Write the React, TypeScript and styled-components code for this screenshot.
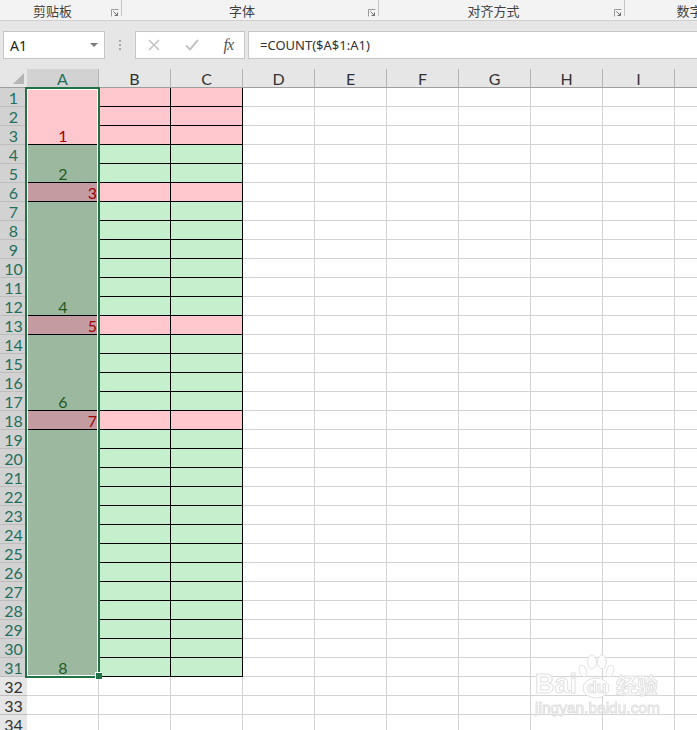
import React, { FC } from "react";
import styled, { createGlobalStyle } from "styled-components";

const GlobalStyle = createGlobalStyle`
  html, body {
    margin: 0;
    padding: 0;
    height: 730px;
    overflow: hidden;
    background: #fff;
  }
`;

const ROW_COUNT = 34;
const UI_FONT = `"Noto Sans", "Liberation Sans", sans-serif`;
const GRID_FONT = `Lato, "Liberation Sans", sans-serif`;
const CJK_FONT = `"Noto Sans CJK SC", "Liberation Sans", sans-serif`;

const Page = styled.div`
  position: relative;
  width: 697px;
  height: 730px;
  overflow: hidden;
  background: #e6e6e6;
  display: flex;
  flex-direction: column;
`;

const Ribbon = styled.div`
  height: 20px;
  flex: none;
  display: flex;
  overflow: hidden;
  background: #f3f3f3;
  border-bottom: 1px solid #cfcfcf;
`;

const RibbonGroup = styled.div<{ $width: number }>`
  position: relative;
  flex: none;
  box-sizing: border-box;
  width: ${(p) => p.$width}px;
  height: 20px;
  padding: 1px 17px 0 0;
  display: flex;
  align-items: center;
  justify-content: center;
  font: 13px/18px ${CJK_FONT};
  color: #3f3f3f;
  white-space: nowrap;
  &::after {
    content: "";
    position: absolute;
    right: 0;
    top: 0;
    width: 1px;
    height: 16px;
    background: #c4c4c4;
  }
`;

const Launcher = styled.svg`
  position: absolute;
  right: 3px;
  top: 9px;
  width: 8px;
  height: 8px;
`;

const FormulaBar = styled.div`
  height: 28px;
  flex: none;
  margin-top: 10px;
  padding-left: 3px;
  display: flex;
  align-items: stretch;
`;

const NameBox = styled.div`
  box-sizing: border-box;
  width: 102px;
  background: #fff;
  border: 1px solid #c6c6c6;
  display: flex;
  align-items: center;
  justify-content: space-between;
  padding: 0 6px;
  font: 14px ${UI_FONT};
  color: #222;
`;

const Caret = styled.span`
  width: 0;
  height: 0;
  border-left: 4px solid transparent;
  border-right: 4px solid transparent;
  border-top: 4px solid #7a7a7a;
`;

const Grip = styled.div`
  width: 30px;
  display: flex;
  flex-direction: column;
  align-items: center;
  justify-content: center;
  gap: 2px;
`;

const GripDot = styled.span`
  width: 2px;
  height: 2px;
  background: #a8a8a8;
`;

const ButtonBox = styled.div`
  box-sizing: border-box;
  width: 110px;
  background: #fff;
  border: 1px solid #c6c6c6;
  display: flex;
  align-items: center;
  justify-content: space-between;
  padding: 0 11px 0 12px;
`;

const FxLabel = styled.span`
  font: italic 16px "Liberation Serif", serif;
  letter-spacing: -1px;
  color: #555;
`;

const FormulaInput = styled.div`
  box-sizing: border-box;
  flex: 1;
  margin-left: 3px;
  background: #fff;
  border: 1px solid #c6c6c6;
  border-right: none;
  padding-left: 11px;
  display: flex;
  align-items: center;
  font: 13px ${UI_FONT};
  color: #333;
`;

const Sheet = styled.div`
  position: relative;
  flex: none;
  margin-top: 10px;
  display: grid;
  grid-template-columns: 27px repeat(10, 72px);
  grid-template-rows: repeat(${ROW_COUNT + 1}, 19px);
`;

const Corner = styled.div`
  grid-row: 1;
  grid-column: 1;
  position: relative;
  box-sizing: border-box;
  border-bottom: 1px solid #9e9e9e;
  &::after {
    content: "";
    position: absolute;
    right: 3px;
    bottom: 3px;
    border-left: 11px solid transparent;
    border-bottom: 11px solid #b5b5b5;
  }
`;

const ColHead = styled.div<{ $col: number; $active?: boolean }>`
  grid-row: 1;
  grid-column: ${(p) => p.$col};
  box-sizing: border-box;
  background: ${(p) => (p.$active ? "#d2d2d2" : "#e6e6e6")};
  border-bottom: 1px solid #9e9e9e;
  border-right: 1px solid #b4b4b4;
  padding-top: 1px;
  display: flex;
  align-items: center;
  justify-content: center;
  font: 16px/18px ${GRID_FONT};
  color: ${(p) => (p.$active ? "#1f6f5c" : "#333")};
`;

const RowHead = styled.div<{ $row: number; $active?: boolean }>`
  grid-row: ${(p) => p.$row};
  grid-column: 1;
  box-sizing: border-box;
  background: ${(p) => (p.$active ? "#d2d2d2" : "#e6e6e6")};
  border-bottom: 1px solid #bdbdbd;
  padding-top: 2px;
  display: flex;
  align-items: center;
  justify-content: center;
  font: 16px/18px ${GRID_FONT};
  color: ${(p) => (p.$active ? "#1f6f5c" : "#333")};
`;

const EmptyCell = styled.div<{ $row: number; $col: number }>`
  grid-row: ${(p) => p.$row};
  grid-column: ${(p) => p.$col};
  box-sizing: border-box;
  background: #fff;
  border-right: 1px solid #d4d4d4;
  border-bottom: 1px solid #d4d4d4;
`;

const DataCell = styled.div<{ $row: number; $col: number; $fill: string }>`
  grid-row: ${(p) => p.$row};
  grid-column: ${(p) => p.$col};
  box-sizing: border-box;
  background: ${(p) => p.$fill};
  border-right: 1px solid #000;
  border-bottom: 1px solid #000;
`;

const MergedCell = styled.div<{
  $row: number;
  $span: number;
  $fill: string;
  $ink: string;
  $right: boolean;
}>`
  grid-row: ${(p) => p.$row} / span ${(p) => p.$span};
  grid-column: 2;
  box-sizing: border-box;
  background: ${(p) => p.$fill};
  border-bottom: 1px solid #000;
  display: flex;
  align-items: flex-end;
  justify-content: ${(p) => (p.$right ? "flex-end" : "center")};
  padding-right: ${(p) => (p.$right ? "2px" : "0")};
  font: 16px/16px ${GRID_FONT};
  color: ${(p) => p.$ink};
`;

const Selection = styled.div`
  position: absolute;
  left: 25px;
  top: 18px;
  width: 75px;
  height: 591px;
  box-sizing: border-box;
  border: 2px solid #217346;
  box-shadow: inset 0 0 0 1px #fff;
  pointer-events: none;
`;

const FillHandle = styled.div`
  position: absolute;
  left: 95px;
  top: 603px;
  width: 6px;
  height: 6px;
  background: #217346;
  border-left: 1px solid #fff;
  border-top: 1px solid #fff;
`;

const Watermark = styled.div`
  position: absolute;
  left: 534px;
  top: 654px;
  width: 130px;
  height: 66px;
  color: rgba(255, 255, 255, 0.9);
  -webkit-text-stroke: 1px #e0e0e0;
  filter: blur(0.3px);
  pointer-events: none;
`;

const Brand = styled.div`
  position: absolute;
  left: 1px;
  top: 13px;
  font: bold 27px/34px "Liberation Sans", sans-serif;
`;

const BrandDu = styled.div`
  position: absolute;
  left: 53px;
  top: 24px;
  font: bold 16px/20px "Liberation Sans", sans-serif;
`;

const BrandCn = styled.div`
  position: absolute;
  left: 82px;
  top: 17px;
  font: bold 21px/26px ${CJK_FONT};
  white-space: nowrap;
`;

const BrandUrl = styled.div`
  position: absolute;
  left: 1px;
  top: 45px;
  font: 15.5px/18px "Liberation Sans", sans-serif;
  white-space: nowrap;
`;

const Paw = styled.svg`
  position: absolute;
  left: 44px;
  top: 0;
  width: 38px;
  height: 46px;
`;

const PINK = "#ffc7ce";
const GREEN = "#c6efce";
const SEL_GREEN = "#9cb9a0";
const SEL_PINK = "#c49ba0";
const INK_GREEN = "#1f5a1f";
const INK_RED = "#9c0006";

interface IBlock {
  row: number;
  span: number;
  value: number;
  fill: string;
  ink: string;
  right: boolean;
}

const blocks: IBlock[] = [
  { row: 1, span: 3, value: 1, fill: PINK, ink: INK_RED, right: false },
  { row: 4, span: 2, value: 2, fill: SEL_GREEN, ink: INK_GREEN, right: false },
  { row: 6, span: 1, value: 3, fill: SEL_PINK, ink: INK_RED, right: true },
  { row: 7, span: 6, value: 4, fill: SEL_GREEN, ink: INK_GREEN, right: false },
  { row: 13, span: 1, value: 5, fill: SEL_PINK, ink: INK_RED, right: true },
  { row: 14, span: 4, value: 6, fill: SEL_GREEN, ink: INK_GREEN, right: false },
  { row: 18, span: 1, value: 7, fill: SEL_PINK, ink: INK_RED, right: true },
  { row: 19, span: 13, value: 8, fill: SEL_GREEN, ink: INK_GREEN, right: false },
];

const pinkRows = [1, 2, 3, 6, 13, 18];
// the tenth column runs past the window edge, its letter is not in view
const columns = ["A", "B", "C", "D", "E", "F", "G", "H", "I", ""];
const rows = Array.from({ length: ROW_COUNT }, (_, i) => i + 1);

const LauncherIcon: FC = () => (
  <Launcher viewBox="0 0 8 8" fill="none" stroke="#6f6f6f" strokeWidth="1">
    <path d="M0.5 7.5V0.5H7.5" stroke="#9a9a9a" />
    <path d="M2.5 2.5L6.5 6.5M6.5 3.5V6.5H3.5" />
  </Launcher>
);

const App: FC = () => {
  return (
    <Page>
      <GlobalStyle />
      <Ribbon>
        <RibbonGroup $width={122}>
          剪贴板
          <LauncherIcon />
        </RibbonGroup>
        <RibbonGroup $width={257}>
          字体
          <LauncherIcon />
        </RibbonGroup>
        <RibbonGroup $width={246}>
          对齐方式
          <LauncherIcon />
        </RibbonGroup>
        <RibbonGroup $width={146}>数字</RibbonGroup>
      </Ribbon>

      <FormulaBar>
        <NameBox>
          A1
          <Caret />
        </NameBox>
        <Grip>
          <GripDot />
          <GripDot />
          <GripDot />
        </Grip>
        <ButtonBox>
          <svg width="12" height="12" viewBox="0 0 12 12" fill="none" stroke="#c4c4c4" strokeWidth="1.6">
            <path d="M1 1L11 11M11 1L1 11" />
          </svg>
          <svg width="14" height="12" viewBox="0 0 14 12" fill="none" stroke="#c4c4c4" strokeWidth="2">
            <path d="M1 6.5L5 10.5L13 1" />
          </svg>
          <FxLabel>fx</FxLabel>
        </ButtonBox>
        <FormulaInput>=COUNT($A$1:A1)</FormulaInput>
      </FormulaBar>

      <Sheet>
        <Corner />
        {columns.map((name, i) => (
          <ColHead key={i} $col={i + 2} $active={name === "A"}>
            {name}
          </ColHead>
        ))}
        {rows.map((row) => (
          <RowHead key={row} $row={row + 1} $active={row <= 31}>
            {row}
          </RowHead>
        ))}
        {blocks.map((block) => (
          <MergedCell
            key={block.row}
            $row={block.row + 1}
            $span={block.span}
            $fill={block.fill}
            $ink={block.ink}
            $right={block.right}
          >
            {block.value}
          </MergedCell>
        ))}
        {rows.map((row) =>
          columns.slice(row <= 31 ? 1 : 0).map((name, i) => {
            const col = row <= 31 ? i + 3 : i + 2;
            if (row <= 31 && col <= 4) {
              return (
                <DataCell
                  key={`${col}-${row}`}
                  $row={row + 1}
                  $col={col}
                  $fill={pinkRows.includes(row) ? PINK : GREEN}
                />
              );
            }
            return <EmptyCell key={`${col}-${row}`} $row={row + 1} $col={col} />;
          })
        )}
        <Selection />
        <FillHandle />
      </Sheet>

      <Watermark>
        <Paw viewBox="0 0 38 46" fill="rgba(255,255,255,0.9)" stroke="#e0e0e0" strokeWidth="1">
          <ellipse cx="5" cy="17" rx="3.5" ry="6" transform="rotate(-20 5 17)" />
          <ellipse cx="14" cy="8" rx="4.5" ry="7" />
          <ellipse cx="24" cy="8" rx="4.5" ry="7" />
          <ellipse cx="32" cy="17" rx="3.5" ry="6" transform="rotate(20 32 17)" />
          <ellipse cx="18" cy="34" rx="13" ry="10" />
        </Paw>
        <Brand>Bai</Brand>
        <BrandDu>du</BrandDu>
        <BrandCn>经验</BrandCn>
        <BrandUrl>jingyan.baidu.com</BrandUrl>
      </Watermark>
    </Page>
  );
};

export default App;
